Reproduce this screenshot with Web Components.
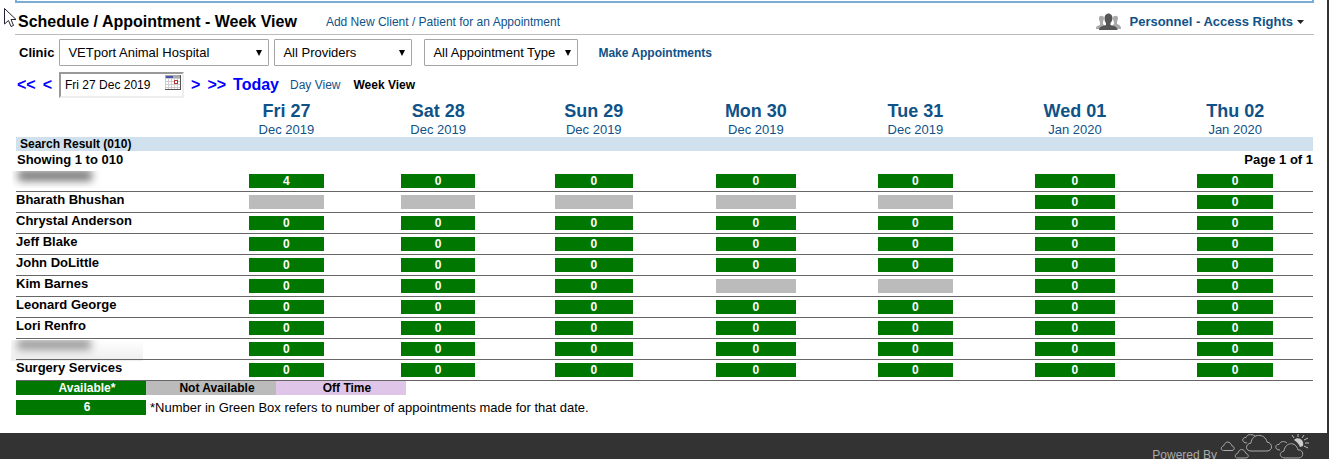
<!DOCTYPE html>
<html lang="en">
<head>
<meta charset="utf-8">
<title>Schedule / Appointment - Week View</title>
<style>
    html{
        background-color: #333;
    }
    body{
        margin: 0;
        font-family: "Liberation Sans", Arial, sans-serif;
        font-size: 13px;
        color: #000;
    }
</style>
</head>
<body>
<schedule-page></schedule-page>

<template id="page-template">
    <style>
        :host{
            display: flex;
            flex-direction: column;
            min-height: 100vh;
            overflow: hidden;
        }
        main{
            box-sizing: border-box;
            margin-right: 2px;
            padding: 0 13px 18px 15px;
            background-color: #fff;
        }
        .top-box{
            height: 1px;
            border: 2px solid #7bacd3;
            border-top: 0;
        }
        .sheet{
            padding: 0 1px;
        }
        mouse-pointer{
            position: absolute;
            left: 3px;
            top: 7px;
        }
    </style>
    <main>
        <div class="top-box"></div>
        <title-bar>
            <span slot="title">Schedule / Appointment - Week View</span>
        </title-bar>
        <filter-bar></filter-bar>
        <date-bar></date-bar>
        <div class="sheet">
            <week-table></week-table>
            <color-legend></color-legend>
        </div>
    </main>
    <page-footer></page-footer>
    <mouse-pointer></mouse-pointer>
</template>

<template id="title-template">
    <style>
        :host{
            display: flex;
            align-items: center;
            height: 25px;
            padding-top: 6px;
            border-bottom: 1px solid #bbb;
        }
        h1{
            margin: 0 29px 0 3px;
            font-size: 16px;
            line-height: 20px;
        }
        a{
            color: #0f5288;
            text-decoration: none;
            font-size: 12px;
        }
        button{
            display: flex;
            align-items: center;
            margin-left: auto;
            margin-right: 10px;
            padding: 0;
            border: 0;
            background: none;
            color: #0f5288;
            font: bold 13px "Liberation Sans", Arial, sans-serif;
        }
        .people{
            margin-right: 8px;
        }
        .arrow{
            margin-left: 4px;
        }
    </style>
    <h1><slot name="title"></slot></h1>
    <a href="#">Add New Client / Patient for an Appointment</a>
    <button type="button">
        <svg class="people" width="25" height="18" viewBox="0 0 25 18">
            <g fill="#aaa">
                <path d="M3 5c0-3 5-3 5 0 0 2-1 3-1 4v2l2 2v3H0c0-3 1-3 4-4V9C3 8 3 6 3 5z"/>
                <path d="M17 5c0-3 5-3 5 0 0 2-1 3-1 4v2c3 1 4 2 4 5h-9v-3l2-2V9c-1-1-1-3-1-4z"/>
            </g>
            <path fill="#555" d="M8.500 5c0-6 8-6 8 0 0 2-1 4-2 5v2c4 1 7 2 7 5H3c0-3 3-4 7-5v-2c-1-1-1.500-3-1.500-5z"/>
        </svg>
        Personnel - Access Rights
        <svg class="arrow" width="7" height="4" viewBox="0 0 7 4"><path fill="#222" d="M0 0h7L3.500 4z"/></svg>
    </button>
</template>

<template id="filter-template">
    <style>
        :host{
            display: flex;
            align-items: center;
            padding: 4px 0 0 4px;
        }
        label, a{
            font-weight: bold;
        }
        .drop{
            display: grid;
            align-items: center;
            margin-right: 5px;
        }
        .clinic{
            width: 210px;
            margin-left: 5px;
        }
        .provider{
            width: 138px;
            margin-right: 12px;
        }
        .type{
            width: 154px;
            margin-right: 20px;
        }
        select{
            grid-area: 1 / 1;
            box-sizing: border-box;
            width: 100%;
            height: 27px;
            padding: 0 0 0 8px;
            appearance: none;
            border: 1px solid #a5a5a5;
            border-radius: 1px;
            background-color: #fff;
            color: #000;
            font: 13px "Liberation Sans", Arial, sans-serif;
        }
        svg{
            grid-area: 1 / 1;
            justify-self: end;
            margin-right: 7px;
            pointer-events: none;
        }
        a{
            color: #0f5288;
            text-decoration: none;
            font-size: 12px;
        }
    </style>
    <label for="clinic">Clinic</label>
    <div class="drop clinic">
        <select id="clinic"><option>VETport Animal Hospital</option></select>
        <svg width="6" height="6" viewBox="0 0 6 6"><path d="M0 0h6L3 6z"/></svg>
    </div>
    <div class="drop provider">
        <select aria-label="Provider"><option>All Providers</option></select>
        <svg width="6" height="6" viewBox="0 0 6 6"><path d="M0 0h6L3 6z"/></svg>
    </div>
    <div class="drop type">
        <select aria-label="Appointment type"><option>All Appointment Type</option></select>
        <svg width="6" height="6" viewBox="0 0 6 6"><path d="M0 0h6L3 6z"/></svg>
    </div>
    <a href="#">Make Appointments</a>
</template>

<template id="date-template">
    <style>
        :host{
            display: flex;
            align-items: center;
            padding: 6px 0 3px 2px;
            line-height: 20px;
        }
        a{
            color: #0f5288;
            text-decoration: none;
            font-size: 12px;
        }
        .step{
            margin-right: 7px;
            color: #00f;
            font-size: 16px;
            font-weight: bold;
        }
        .now{
            margin-right: 11px;
        }
        .current{
            margin-left: 13px;
            color: #000;
            font-weight: bold;
        }
        .field{
            display: flex;
            align-items: flex-start;
            box-sizing: border-box;
            width: 125px;
            height: 26px;
            margin-right: 7px;
            border: 2px solid #eee;
            border-top-color: #999;
            border-left-color: #999;
        }
        input{
            flex: 1;
            min-width: 0;
            height: 22px;
            padding: 0 0 0 4px;
            border: 0;
            outline: 0;
            background: none;
            font: 12px "Liberation Sans", Arial, sans-serif;
        }
        button{
            padding: 1px 0 0;
            border: 0;
            background: none;
            line-height: 0;
        }
    </style>
    <a class="step" href="#">&lt;&lt;</a>
    <a class="step" href="#">&lt;</a>
    <div class="field">
        <input type="text" aria-label="Date" value="Fri 27 Dec 2019">
        <button type="button" aria-label="Open calendar">
            <svg width="17" height="16" viewBox="0 0 17 16" shape-rendering="crispEdges">
                <path fill="#ccc" d="M0 0h16v15H0z"/>
                <path fill="#aaa" d="M0 0h16v3H0z"/>
                <path fill="#4a52b0" d="M1 1h7v2H1z"/>
                <path stroke="#fff" stroke-width="2" stroke-dasharray="2 1" fill="none" d="M1 5h14M1 8h14M1 11h14M1 14h14"/>
                <path stroke="#555" fill="none" d="M15.500 0v15M0 14.500h16"/>
                <path stroke="#b33" fill="#fff" d="M9.500 5.500h3v3h-3z"/>
            </svg>
        </button>
    </div>
    <a class="step" href="#">&gt;</a>
    <a class="step" href="#">&gt;&gt;</a>
    <a class="step now" href="#">Today</a>
    <a href="#">Day View</a>
    <a class="current" href="#" aria-current="page">Week View</a>
</template>

<template id="week-template">
    <style>
        :host{
            display: block;
        }
        table{
            width: 100%;
            table-layout: fixed;
            border-collapse: collapse;
        }
        /* the days are not all of one width */
        .who{ width: 15%; }
        .d1, .d2{ width: 11.7%; }
        .d3{ width: 12.3%; }
        .d4, .d6{ width: 12.7%; }
        .d5{ width: 11.9%; }
        .d7{ width: 12%; }
        th, td{
            padding: 0;
        }
        thead a{
            display: block;
            color: #0f5288;
            text-decoration: none;
            font-weight: normal;
            font-size: 13px;
            line-height: 15px;
        }
        thead strong{
            display: block;
            font-size: 18px;
            line-height: 21px;
        }
        .result th{
            height: 14px;
            padding-left: 4px;
            background-color: #d0e0ed;
            font-size: 12px;
            line-height: 14px;
            text-align: left;
        }
        .paging th{
            height: 20px;
            padding-left: 1px;
            line-height: 18px;
            text-align: left;
            vertical-align: top;
        }
        .paging th + th{
            text-align: right;
        }
        .staff > *{
            height: 20px;
            border-bottom: 1px solid #666;
        }
        .staff th{
            font-size: 13px;
            line-height: 15px;
            text-align: left;
            vertical-align: top;
        }
        .blurred{
            display: block;
            overflow: hidden;
            width: 90px;
            height: 17px;
            margin-left: -4px;
        }
        .blurred::before{
            content: "";
            display: block;
            width: 74px;
            height: 11px;
            margin: -1px 0 0 6px;
            background-color: #777;
            filter: blur(4px);
        }
        .boxed{
            width: 132px;
            height: 21px;
            margin: 1px 0 -3px -5px;
            background: linear-gradient(#fff, #eee);
        }
        .boxed::before{
            background-color: #999;
        }
    </style>
    <table>
        <colgroup>
            <col class="who"><col class="d1"><col class="d2"><col class="d3"><col class="d4"><col class="d5"><col class="d6"><col class="d7">
        </colgroup>
        <thead><tr class="days"><td></td></tr></thead>
        <tbody>
            <tr class="result"><th colspan="8">Search Result (010)</th></tr>
            <tr class="paging"><th colspan="4">Showing 1 to 010</th><th colspan="4">Page 1 of 1</th></tr>
        </tbody>
    </table>
</template>

<template id="slot-template">
    <style>
        :host{
            display: block;
            width: 49%;
            height: 14px;
            margin: 0 auto;
            background-color: #070;
            color: #fff;
            font-size: 12px;
            font-weight: bold;
            line-height: 14px;
            text-align: center;
        }
        :host([off]){
            background-color: #bbb;
        }
    </style>
    <slot></slot>
</template>

<template id="legend-template">
    <style>
        :host{
            display: block;
        }
        .row{
            display: flex;
            margin-bottom: 5px;
            line-height: 14px;
        }
        .key{
            box-sizing: border-box;
            width: 130px;
            padding-left: 12px;
            font-size: 12px;
            font-weight: bold;
            text-align: center;
        }
        .free{
            background-color: #070;
            color: #fff;
        }
        .busy{
            background-color: #bbb;
        }
        .off{
            background-color: #dfc6e8;
        }
        .note{
            line-height: 15px;
            margin-bottom: 0;
        }
        .note span{
            margin-left: 4px;
        }
    </style>
    <div class="row">
        <div class="key free">Available*</div>
        <div class="key busy">Not Available</div>
        <div class="key off">Off Time</div>
    </div>
    <div class="row note">
        <div class="key free">6</div>
        <span>*Number in Green Box refers to number of appointments made for that date.</span>
    </div>
</template>

<template id="footer-template">
    <style>
        :host{
            display: flex;
            justify-content: flex-end;
            align-items: flex-start;
            flex: 1;
            height: 26px;
            padding-right: 18px;
            color: #aaa;
            font-size: 12px;
        }
        span{
            margin: 15px 3px 0 0;
        }
    </style>
    <span>Powered By</span>
    <svg width="91" height="26" viewBox="0 0 91 26" fill="none" stroke="#aaa">
        <path d="M3.500 17.500c-3 0-3-4 0-4.500 1-2 2-4 4-4s4 2 4.500 4c3 .5 3 4.500 0 4.500z"/>
        <path d="M17.500 25c-3 0-3-4 0-4.500 1-2 2-4 4-4s4 2 4.500 4c3 .5 3 4.500 0 4.500z"/>
        <path d="M31 18c-6 0-6-7 0-8 1-10 14-10 16-1 6 1 6 9 0 9z"/>
        <path d="M27 10c-6 0-5-6-1-5.500 1-3 5-4 9-1.500"/>
        <path d="M64 25c-5-1-5-6 0-7 1-9 12-10 14-1 5-1 7 7 1 8z"/>
        <path d="M60 17c-6 0-5-6-1-5.500 1-3 5-4 8-1.500"/>
        <path fill="#ccc" stroke="none" d="M74 7c3-4 11-1 9 6l-3 1c-1-3-3-5-6-7z"/>
        <path stroke="#bbb" d="M78 1v3M72 2l2 3M84 2l-2 3M88 5l-4 2M89 10h-4M88 15l-4-2"/>
    </svg>
</template>

<template id="pointer-template">
    <style>
        :host{
            display: block;
        }
    </style>
    <svg width="14" height="21" viewBox="0 0 14 21">
        <path fill="#fff" stroke="#223" d="M1.500 1.500v15.500l4-3.500 2.500 6 2.500-1-2.500-6h5z"/>
    </svg>
</template>

<script>
// clones the template with this id into an open shadow root
class TemplateElement extends HTMLElement{
    constructor(id){
        super();
        this.attachShadow({mode:"open"});
        this.shadowRoot.appendChild(document.getElementById(id).content.cloneNode(true));
    }
}

class MousePointer extends TemplateElement{
    constructor(){ super("pointer-template"); }
}

class TitleBar extends TemplateElement{
    constructor(){ super("title-template"); }
}

class FilterBar extends TemplateElement{
    constructor(){ super("filter-template"); }
}

class DateBar extends TemplateElement{
    constructor(){ super("date-template"); }
}

class DaySlot extends TemplateElement{
    constructor(){ super("slot-template"); }
}

const days = [
    ["Fri 27", "Dec 2019"],
    ["Sat 28", "Dec 2019"],
    ["Sun 29", "Dec 2019"],
    ["Mon 30", "Dec 2019"],
    ["Tue 31", "Dec 2019"],
    ["Wed 01", "Jan 2020"],
    ["Thu 02", "Jan 2020"]
];

// "-" is a day when the person is not available
const staff = [
    [`<span class="blurred"></span>`, "4000000"],
    ["Bharath Bhushan", "-----00"],
    ["Chrystal Anderson", "0000000"],
    ["Jeff Blake", "0000000"],
    ["John DoLittle", "0000000"],
    ["Kim Barnes", "000--00"],
    ["Leonard George", "0000000"],
    ["Lori Renfro", "0000000"],
    [`<span class="blurred boxed"></span>`, "0000000"],
    ["Surgery Services", "0000000"]
];

class WeekTable extends TemplateElement{
    constructor(){ super("week-template"); }

    connectedCallback(){
        const head = this.shadowRoot.querySelector(".days");
        const body = this.shadowRoot.querySelector("tbody");
        days.forEach(([day, month]) => {
            head.insertAdjacentHTML("beforeend", `<th scope="col"><a href="#"><strong>${day}</strong>${month}</a></th>`);
        });
        staff.forEach(([who, counts]) => {
            const cells = [...counts].map(n => n === "-"
                ? `<td><day-slot off></day-slot></td>`
                : `<td><day-slot>${n}</day-slot></td>`).join("");
            body.insertAdjacentHTML("beforeend", `<tr class="staff"><th scope="row">${who}</th>${cells}</tr>`);
        });
    }
}

class ColorLegend extends TemplateElement{
    constructor(){ super("legend-template"); }
}

class PageFooter extends TemplateElement{
    constructor(){ super("footer-template"); }
}

class SchedulePage extends TemplateElement{
    constructor(){ super("page-template"); }
}

customElements.define("mouse-pointer", MousePointer);
customElements.define("title-bar", TitleBar);
customElements.define("filter-bar", FilterBar);
customElements.define("date-bar", DateBar);
customElements.define("day-slot", DaySlot);
customElements.define("week-table", WeekTable);
customElements.define("color-legend", ColorLegend);
customElements.define("page-footer", PageFooter);
customElements.define("schedule-page", SchedulePage);
</script>
</body>
</html>
